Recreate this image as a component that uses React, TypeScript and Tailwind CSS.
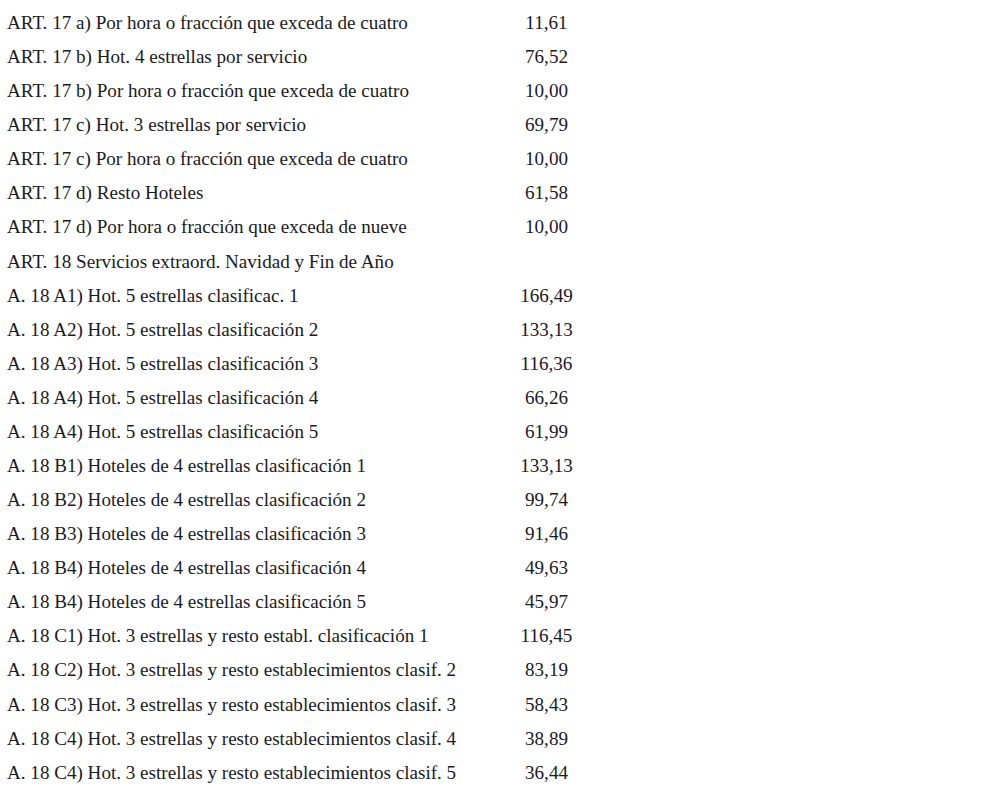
const rows: [string, string][] = [
  ["ART. 17 a) Por hora o fracción que exceda de cuatro", "11,61"],
  ["ART. 17 b) Hot. 4 estrellas por servicio", "76,52"],
  ["ART. 17 b) Por hora o fracción que exceda de cuatro", "10,00"],
  ["ART. 17 c) Hot. 3 estrellas por servicio", "69,79"],
  ["ART. 17 c) Por hora o fracción que exceda de cuatro", "10,00"],
  ["ART. 17 d) Resto Hoteles", "61,58"],
  ["ART. 17 d) Por hora o fracción que exceda de nueve", "10,00"],
  ["ART. 18 Servicios extraord. Navidad y Fin de Año", ""],
  ["A. 18 A1) Hot. 5 estrellas clasificac. 1", "166,49"],
  ["A. 18 A2) Hot. 5 estrellas clasificación 2", "133,13"],
  ["A. 18 A3) Hot. 5 estrellas clasificación 3", "116,36"],
  ["A. 18 A4) Hot. 5 estrellas clasificación 4", "66,26"],
  ["A. 18 A4) Hot. 5 estrellas clasificación 5", "61,99"],
  ["A. 18 B1) Hoteles de 4 estrellas clasificación 1", "133,13"],
  ["A. 18 B2) Hoteles de 4 estrellas clasificación 2", "99,74"],
  ["A. 18 B3) Hoteles de 4 estrellas clasificación 3", "91,46"],
  ["A. 18 B4) Hoteles de 4 estrellas clasificación 4", "49,63"],
  ["A. 18 B4) Hoteles de 4 estrellas clasificación 5", "45,97"],
  ["A. 18 C1) Hot. 3 estrellas y resto establ. clasificación 1", "116,45"],
  ["A. 18 C2) Hot. 3 estrellas y resto establecimientos clasif. 2", "83,19"],
  ["A. 18 C3) Hot. 3 estrellas y resto establecimientos clasif. 3", "58,43"],
  ["A. 18 C4) Hot. 3 estrellas y resto establecimientos clasif. 4", "38,89"],
  ["A. 18 C4) Hot. 3 estrellas y resto establecimientos clasif. 5", "36,44"],
];

export default function App() {
  return (
    <div className="w-[1006px] h-[795px] bg-white overflow-hidden pt-[6px] pl-[7px] font-['Liberation_Serif',serif] text-[19.1px] text-[#1a1a24]">
      {rows.map(([label, value], i) => (
        <div key={i} className="grid grid-cols-[493px_93px] leading-[34.09px] h-[34.09px]">
          <span className="whitespace-nowrap">{label}</span>
          <span className="text-center">{value}</span>
        </div>
      ))}
    </div>
  );
}
